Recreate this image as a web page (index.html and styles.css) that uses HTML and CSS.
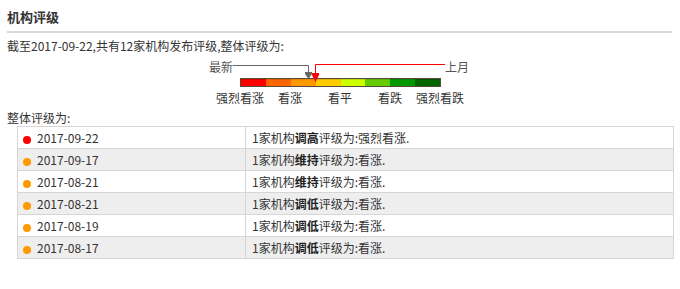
FILE: index.html
```html
<!DOCTYPE html>
<html lang="zh-CN">
<head>
<meta charset="utf-8">
<title>机构评级</title>
<link rel="stylesheet" href="styles.css">
</head>
<body>
<div class="panel">
  <h2 class="title">机构评级</h2>
  <p class="summary">截至2017-09-22,共有12家机构发布评级,整体评级为:</p>
  <div class="gauge">
    <div class="gauge-top"><span class="tag">最新</span><span class="tag">上月</span></div>
    <div class="bar">
      <i class="s1"></i><i class="s2"></i><i class="s3"></i><i class="s4"></i><i class="s5"></i><i class="s6"></i><i class="s7"></i><i class="s8"></i>
    </div>
    <div class="scale">
      <span>强烈看涨</span><span>看涨</span><span>看平</span><span>看跌</span><span>强烈看跌</span>
    </div>
    <svg class="pointers" width="270" height="49" viewBox="0 0 270 49">
      <polyline points="28,9.5 103.5,9.5 103.5,17" fill="none" stroke="#666" stroke-width="1"/>
      <polygon points="100,16 107,16 107,18 103.5,23 100,18" fill="#666"/>
      <polyline points="110.5,26 110.5,8.5 240,8.5" fill="none" stroke="#f00" stroke-width="1"/>
      <polygon points="107,17 114,17 114,19 110.5,26 107,19" fill="#f00"/>
    </svg>
  </div>
  <p class="overall">整体评级为:</p>
  <table class="ratings">
    <colgroup><col class="c-date"><col class="c-text"></colgroup>
    <tbody>
      <tr><td><span class="dot red"></span>2017-09-22</td><td>1家机构<b>调高</b>评级为:强烈看涨.</td></tr>
      <tr><td><span class="dot orange"></span>2017-09-17</td><td>1家机构<b>维持</b>评级为:看涨.</td></tr>
      <tr><td><span class="dot orange"></span>2017-08-21</td><td>1家机构<b>维持</b>评级为:看涨.</td></tr>
      <tr><td><span class="dot orange"></span>2017-08-21</td><td>1家机构<b>调低</b>评级为:看涨.</td></tr>
      <tr><td><span class="dot orange"></span>2017-08-19</td><td>1家机构<b>调低</b>评级为:看涨.</td></tr>
      <tr><td><span class="dot orange"></span>2017-08-17</td><td>1家机构<b>调低</b>评级为:看涨.</td></tr>
    </tbody>
  </table>
</div>
</body>
</html>
```
FILE: styles.css
```css
body {
  margin: 0;
  font-family: "Noto Sans CJK SC", "Liberation Sans", sans-serif;
  font-size: 12px;
  color: #333;
  background: #fff;
}
.panel {
  margin-left: 7px;
  width: 665px;
}
.title {
  margin: 0;
  box-sizing: border-box;
  height: 33px;
  padding-top: 8px;
  font-size: 13px;
  font-weight: bold;
  line-height: 17px;
  color: #333;
  border-bottom: 2px solid #dadada;
}
.summary {
  margin: 4px 0 0;
  line-height: 18px;
}
.gauge {
  position: relative;
  margin: 1px 0 0 198px;
  width: 270px;
  height: 49px;
}
.gauge-top {
  display: flex;
  justify-content: space-between;
  align-items: center;
  height: 22px;
  padding: 0 6px 0 4px;
  box-sizing: border-box;
}
.tag {
  color: #555;
  line-height: 14px;
}
.bar {
  display: flex;
  margin-left: 35px;
  width: 201px;
  height: 9px;
  box-sizing: border-box;
  border: 1px solid #5a4a3a;
}
.bar i {
  flex: 1;
  box-shadow: inset 0 1px 0 rgba(0,0,0,0.12);
}
.s1 { background: #ff0000; }
.s2 { background: #ff6600; }
.s3 { background: #ff9900; }
.s4 { background: #ffcc00; }
.s5 { background: #ccff00; }
.s6 { background: #66cc00; }
.s7 { background: #009900; }
.s8 { background: #006600; }
.scale {
  display: flex;
  margin: 4px 0 0 10px;
}
.scale span {
  width: 50px;
  text-align: center;
  line-height: 14px;
  white-space: nowrap;
}
.pointers {
  position: absolute;
  left: 0;
  top: 0;
}
.overall {
  margin: 5px 0 0;
  line-height: 16px;
}
.ratings {
  margin-left: 10px;
  width: 656px;
  border-collapse: collapse;
  table-layout: fixed;
}
.c-date { width: 228px; }
.c-text { width: 428px; }
.ratings td {
  height: 21px;
  padding: 0 6px 0 5px;
  border: 1px solid #d6d6d6;
  line-height: 21px;
  white-space: nowrap;
}
.ratings td + td {
  padding-left: 6px;
}
.ratings tr:nth-child(even) td {
  background: #eeeeee;
}
.ratings b {
  font-weight: bold;
  color: #222;
}
.dot {
  display: inline-block;
  width: 8px;
  height: 8px;
  border-radius: 50%;
  margin-right: 6px;
  vertical-align: -1px;
}
.red { background: #ff0000; }
.orange { background: #ff9900; }
```
